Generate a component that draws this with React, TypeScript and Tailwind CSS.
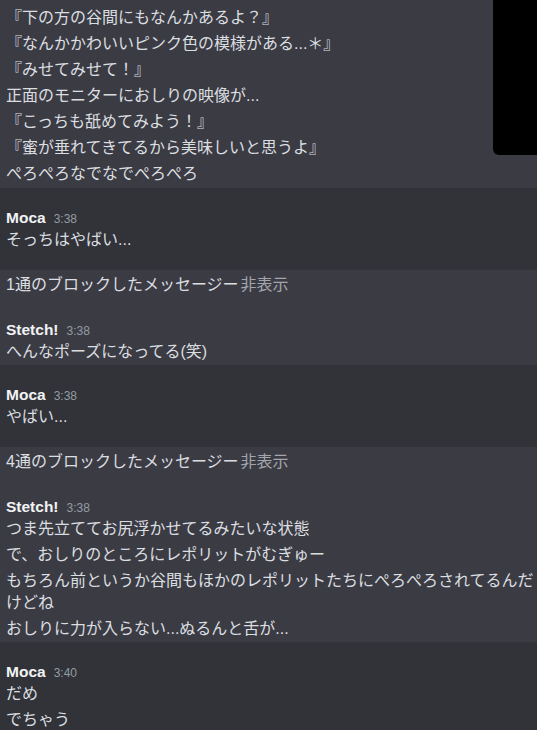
import React from 'react';

type Msg = { text: string };

const light = 'bg-[#3b3c43]';
const dark = 'bg-[#313338]';

const Line: React.FC<{ text: string }> = ({ text }) => (
  <div className="py-[2px] pl-[6px] pr-[2px]">
    <p className="text-[16px] leading-[22px] h-auto text-[#dbdee1] break-all">{text}</p>
  </div>
);

const Header: React.FC<{ name: string; time: string }> = ({ name, time }) => (
  <div className="flex items-baseline h-[22px] leading-[22px] overflow-hidden">
    <span className="text-[15.5px] font-bold text-[#f2f3f5]">{name}</span>
    <span className="ml-[8px] text-[12px] text-[#949ba4]">{time}</span>
  </div>
);

// first message of a group: name row + content in one block
const GroupStart: React.FC<{ name: string; time: string; first: string }> = ({ name, time, first }) => (
  <div className="py-[2px] pl-[6px] pr-[2px]">
    <Header name={name} time={time} />
    <p className="text-[16px] leading-[22px] text-[#dbdee1]">{first}</p>
  </div>
);

const Blocked: React.FC<{ count: number }> = ({ count }) => (
  <div className="pt-[4px] pl-[6px] h-[26px] text-[16px] leading-[22px] text-[#dbdee1]">
    {count}通のブロックしたメッセージー<span className="ml-[2px] text-[#a3a6ad]">非表示</span>
  </div>
);

const topLines: Msg[] = [
  { text: '『下の方の谷間にもなんかあるよ？』' },
  { text: '『なんかかわいいピンク色の模様がある...＊』' },
  { text: '『みせてみせて！』' },
  { text: '正面のモニターにおしりの映像が...' },
  { text: '『こっちも舐めてみよう！』' },
  { text: '『蜜が垂れてきてるから美味しいと思うよ』' },
  { text: 'ぺろぺろなでなでぺろぺろ' },
];

const stetchLines: Msg[] = [
  { text: 'で、おしりのところにレポリットがむぎゅー' },
  { text: 'もちろん前というか谷間もほかのレポリットたちにぺろぺろされてるんだけどね' },
  { text: 'おしりに力が入らない...ぬるんと舌が...' },
];

export default function App() {
  return (
    <div className="relative w-[537px] h-[730px] overflow-hidden bg-[#313338] font-['Liberation_Sans','Noto_Sans_CJK_JP',sans-serif]">
      {/* continued messages */}
      <section className={`${light} h-[188px] pt-[5px]`}>
        {topLines.map((m, i) => (
          <Line key={i} text={m.text} />
        ))}
      </section>

      <section className={`${dark} h-[82px] pt-[17px]`}>
        <GroupStart name="Moca" time="3:38" first="そっちはやばい..." />
      </section>

      <section className={`${light} h-[95px]`}>
        <Blocked count={1} />
        <div className="pt-[21px]">
          <GroupStart name="Stetch!" time="3:38" first="へんなポーズになってる(笑)" />
        </div>
      </section>

      <section className={`${dark} h-[82px] pt-[17px]`}>
        <GroupStart name="Moca" time="3:38" first="やばい..." />
      </section>

      <section className={`${light} h-[195px]`}>
        <Blocked count={4} />
        <div className="pt-[21px]">
          <GroupStart name="Stetch!" time="3:38" first="つま先立ててお尻浮かせてるみたいな状態" />
          {stetchLines.map((m, i) => (
            <Line key={i} text={m.text} />
          ))}
        </div>
      </section>

      <section className={`${dark} pt-[17px]`}>
        <GroupStart name="Moca" time="3:40" first="だめ" />
        <Line text="でちゃう" />
      </section>

      {/* video overlay in the corner */}
      <div className="absolute top-0 right-0 w-[44px] h-[155px] bg-black rounded-bl-[6px]" />
    </div>
  );
}
